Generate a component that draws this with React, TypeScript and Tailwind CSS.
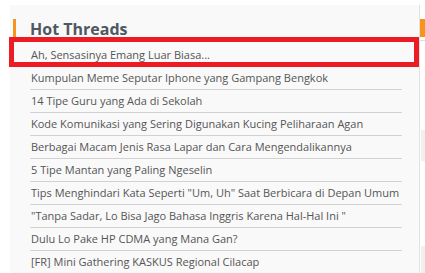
const threads = [
  'Ah, Sensasinya Emang Luar Biasa...',
  'Kumpulan Meme Seputar Iphone yang Gampang Bengkok',
  '14 Tipe Guru yang Ada di Sekolah',
  'Kode Komunikasi yang Sering Digunakan Kucing Peliharaan Agan',
  'Berbagai Macam Jenis Rasa Lapar dan Cara Mengendalikannya',
  '5 Tipe Mantan yang Paling Ngeselin',
  'Tips Menghindari Kata Seperti "Um, Uh" Saat Berbicara di Depan Umum',
  '"Tanpa Sadar, Lo Bisa Jago Bahasa Inggris Karena Hal-Hal Ini "',
  'Dulu Lo Pake HP CDMA yang Mana Gan?',
  '[FR] Mini Gathering KASKUS Regional Cilacap',
]

export default function App() {
  return (
    <div className="relative flex h-[273px] w-[425px] overflow-hidden bg-white pl-[10px] pt-[5px] font-['Open_Sans',sans-serif]">
      <div className="w-[410px] shrink-0 border-r border-[#e2e2e2] bg-[#f9f9f9]">
        <div className="flex h-[39px] items-start gap-[14px] pl-[3px] pt-[14px]">
          <div className="h-[18px] w-[3px] bg-[#f7941d]" />
          <h2 className="mt-[1px] text-[16px] font-bold leading-[18px] text-[#4f5861]">Hot Threads</h2>
        </div>
        <ul className="ml-[20px] w-[372px]">
          {threads.map(t => (
            <li key={t} className="flex h-[23px] items-center whitespace-nowrap border-b border-[#d2d2d2] pl-[1px] text-[11px] text-[#555]">
              {t}
            </li>
          ))}
        </ul>
      </div>
      <div className="flex-1">
        <div className="mt-[14px] h-[18px] bg-[#f7941d]" />
        <div className="mt-[3px] h-[1px] bg-[#dedede]" />
        <div className="ml-[1px] mt-[89px] h-[31px] bg-[#efefef]" />
        <div className="ml-[1px] mt-[85px] h-[30px] bg-[#efefef]" />
      </div>
      {/* highlight overlay */}
      <div className="absolute left-[9px] top-[37px] h-[30px] w-[410px] border-[5px] border-[#ed1c24]" />
    </div>
  )
}
